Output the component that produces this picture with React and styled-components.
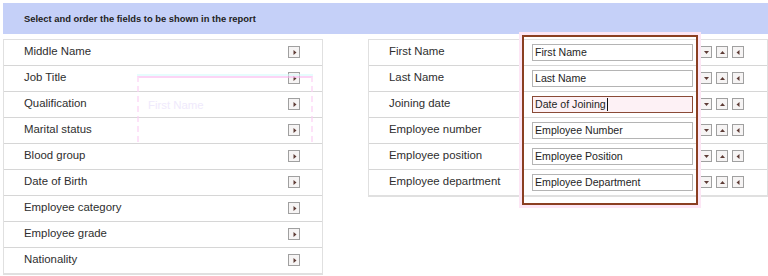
import React from "react";
import styled, { createGlobalStyle } from "styled-components";

const Global = createGlobalStyle`
  html, body { margin: 0; padding: 0; background: #fff; }
  body { font-family: "Liberation Sans", Arial, sans-serif; color: #333; }
`;

const Page = styled.div`
  position: relative;
  width: 768px;
  height: 276px;
  overflow: hidden;
  padding: 3px 0 0 3px;
  box-sizing: border-box;
`;

const Header = styled.div`
  height: 31px;
  background: #c5d0f8;
  display: flex;
  align-items: center;
  padding-left: 21px;
  font-size: 9.4px;
  font-weight: bold;
  color: #222;
  margin-bottom: 5px;
`;

const Columns = styled.div`
  display: flex;
  align-items: flex-start;
  gap: 45px;
`;

const Table = styled.div`
  width: ${(p) => p.$w}px;
  border: 1px solid #e0e0e0;
  border-bottom-width: 2px;
  box-sizing: border-box;
`;

const Row = styled.div`
  height: 26px;
  display: flex;
  align-items: flex-start;
  border-top: 1px solid #d6d6d6;
  box-sizing: border-box;
  &:first-child { border-top: none; height: 25px; }
`;

const Label = styled.div`
  width: ${(p) => p.$w}px;
  padding-left: 20px;
  padding-top: 4px;
  font-size: 11.4px;
  line-height: 14px;
  color: #2e2e2e;
  flex-shrink: 0;
  box-sizing: border-box;
`;

const IconBox = styled.span`
  width: ${(p) => p.$s || 12}px;
  height: ${(p) => p.$s || 12}px;
  border: 1px solid #a0a0a0;
  background: #f6f4f4;
  box-sizing: border-box;
  display: inline-flex;
  align-items: center;
  justify-content: center;
  margin-top: ${(p) => p.$mt || 0}px;
  flex-shrink: 0;
`;

const Arrow = ({ dir }) => {
  const pts = {
    right: "3.5,2 6.5,4.5 3.5,7",
    left: "5.5,2 2.5,4.5 5.5,7",
    up: "2,6 4.5,3 7,6",
    down: "2,3 4.5,6 7,3",
  }[dir];
  return (
    <svg width="9" height="9" viewBox="0 0 9 9">
      <polygon points={pts} fill="#5e3c36" />
    </svg>
  );
};

const Input = styled.div`
  width: 161px;
  height: 17px;
  border: 1px solid ${(p) => (p.$focus ? "#8a4a36" : "#b4b4b4")};
  background: ${(p) => (p.$focus ? "#fdf1f5" : "#fff")};
  box-sizing: border-box;
  font-size: 10.6px;
  line-height: 15px;
  padding-left: 2px;
  color: #1e1e1e;
  margin-top: 4px;
  margin-left: 9px;
  flex-shrink: 0;
  display: flex;
  align-items: center;
`;

const Caret = styled.span`
  display: inline-block;
  width: 1px;
  height: 13px;
  background: #111;
  margin-left: 1px;
`;

const Buttons = styled.div`
  display: flex;
  gap: 4px;
  margin-left: 7px;
  margin-top: 6px;
`;

const Highlight = styled.div`
  position: absolute;
  left: 522px;
  top: 35px;
  width: 176px;
  height: 170px;
  border: 2px solid #8b3f22;
  box-sizing: border-box;
  box-shadow: 0 0 0 3px #fde6f5;
  pointer-events: none;
`;

const Ghost = styled.div`
  position: absolute;
  left: 137px;
  top: 76px;
  width: 176px;
  height: 66px;
  border-top: 2px solid #fbb8f0;
  border-left: 2px dashed #fcd0f4;
  border-right: 2px dashed #fcd0f4;
  box-shadow: 0 -2px 0 #d6fcfc;
  box-sizing: border-box;
  pointer-events: none;
  opacity: 0.6;
`;

const GhostText = styled.div`
  position: absolute;
  left: 148px;
  top: 99px;
  font-size: 11.4px;
  color: #efeafc;
  pointer-events: none;
`;

const left = [
  "Middle Name",
  "Job Title",
  "Qualification",
  "Marital status",
  "Blood group",
  "Date of Birth",
  "Employee category",
  "Employee grade",
  "Nationality",
];

const right = [
  ["First Name", "First Name"],
  ["Last Name", "Last Name"],
  ["Joining date", "Date of Joining"],
  ["Employee number", "Employee Number"],
  ["Employee position", "Employee Position"],
  ["Employee department", "Employee Department"],
];

export default function App() {
  return (
    <Page>
      <Global />
      <Header>Select and order the fields to be shown in the report</Header>
      <Columns>
        <Table $w={320}>
          {left.map((l) => (
            <Row key={l}>
              <Label $w={284}>{l}</Label>
              <IconBox $s={12} $mt={6}>
                <Arrow dir="right" />
              </IconBox>
            </Row>
          ))}
        </Table>
        <Table $w={400}>
          {right.map(([l, v], i) => (
            <Row key={l}>
              <Label $w={154}>{l}</Label>
              <Input $focus={i === 2}>
                {v}
                {i === 2 && <Caret />}
              </Input>
              <Buttons>
                <IconBox>
                  <Arrow dir="down" />
                </IconBox>
                <IconBox>
                  <Arrow dir="up" />
                </IconBox>
                <IconBox>
                  <Arrow dir="left" />
                </IconBox>
              </Buttons>
            </Row>
          ))}
        </Table>
      </Columns>
      <Ghost />
      <GhostText>First Name</GhostText>
      <Highlight />
    </Page>
  );
}
